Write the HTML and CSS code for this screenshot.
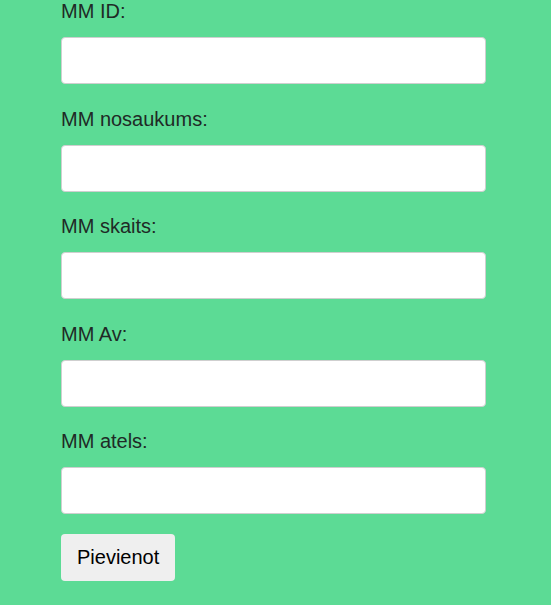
FILE: index.html
```html
<!DOCTYPE html>
<html lang="lv">
<head>
<meta charset="utf-8">
<title>MM forma</title>
<link rel="stylesheet" href="styles.css">
</head>
<body>
<form class="form">
  <div class="field">
    <label class="label" for="mm-id">MM ID:</label>
    <input class="input" id="mm-id" type="text">
  </div>
  <div class="field">
    <label class="label" for="mm-nos">MM nosaukums:</label>
    <input class="input" id="mm-nos" type="text">
  </div>
  <div class="field">
    <label class="label" for="mm-skaits">MM skaits:</label>
    <input class="input" id="mm-skaits" type="text">
  </div>
  <div class="field">
    <label class="label" for="mm-av">MM Av:</label>
    <input class="input" id="mm-av" type="text">
  </div>
  <div class="field">
    <label class="label" for="mm-atels">MM atels:</label>
    <input class="input" id="mm-atels" type="text">
  </div>
  <button class="button" type="button">Pievienot</button>
</form>
</body>
</html>
```
FILE: styles.css
```css
html, body {
  margin: 0;
  padding: 0;
  background: #5cdb95;
  height: 100%;
}

body {
  font-family: "Liberation Sans", Arial, sans-serif;
  color: #222;
}

.form {
  width: 425px;
  margin-left: 61px;
  display: flex;
  flex-direction: column;
  align-items: flex-start;
}

.field {
  width: 100%;
  display: flex;
  flex-direction: column;
  margin-bottom: 23.5px;
}

.field:last-of-type {
  margin-bottom: 20px;
}

.label {
  font-size: 20px;
  line-height: 23px;
  margin-bottom: 14px;
  color: #1f2a26;
}

.input {
  box-sizing: border-box;
  width: 425px;
  height: 47px;
  border: 1px solid #cfcfcf;
  border-radius: 4px;
  background: #fff;
  font-family: inherit;
  font-size: 18px;
  padding: 0 10px;
  outline: none;
}

.button {
  box-sizing: border-box;
  height: 47px;
  padding: 0 16px;
  border: none;
  border-radius: 4px;
  background: #efefef;
  font-family: "Liberation Sans", Arial, sans-serif;
  font-size: 20px;
  color: #000;
}
```
